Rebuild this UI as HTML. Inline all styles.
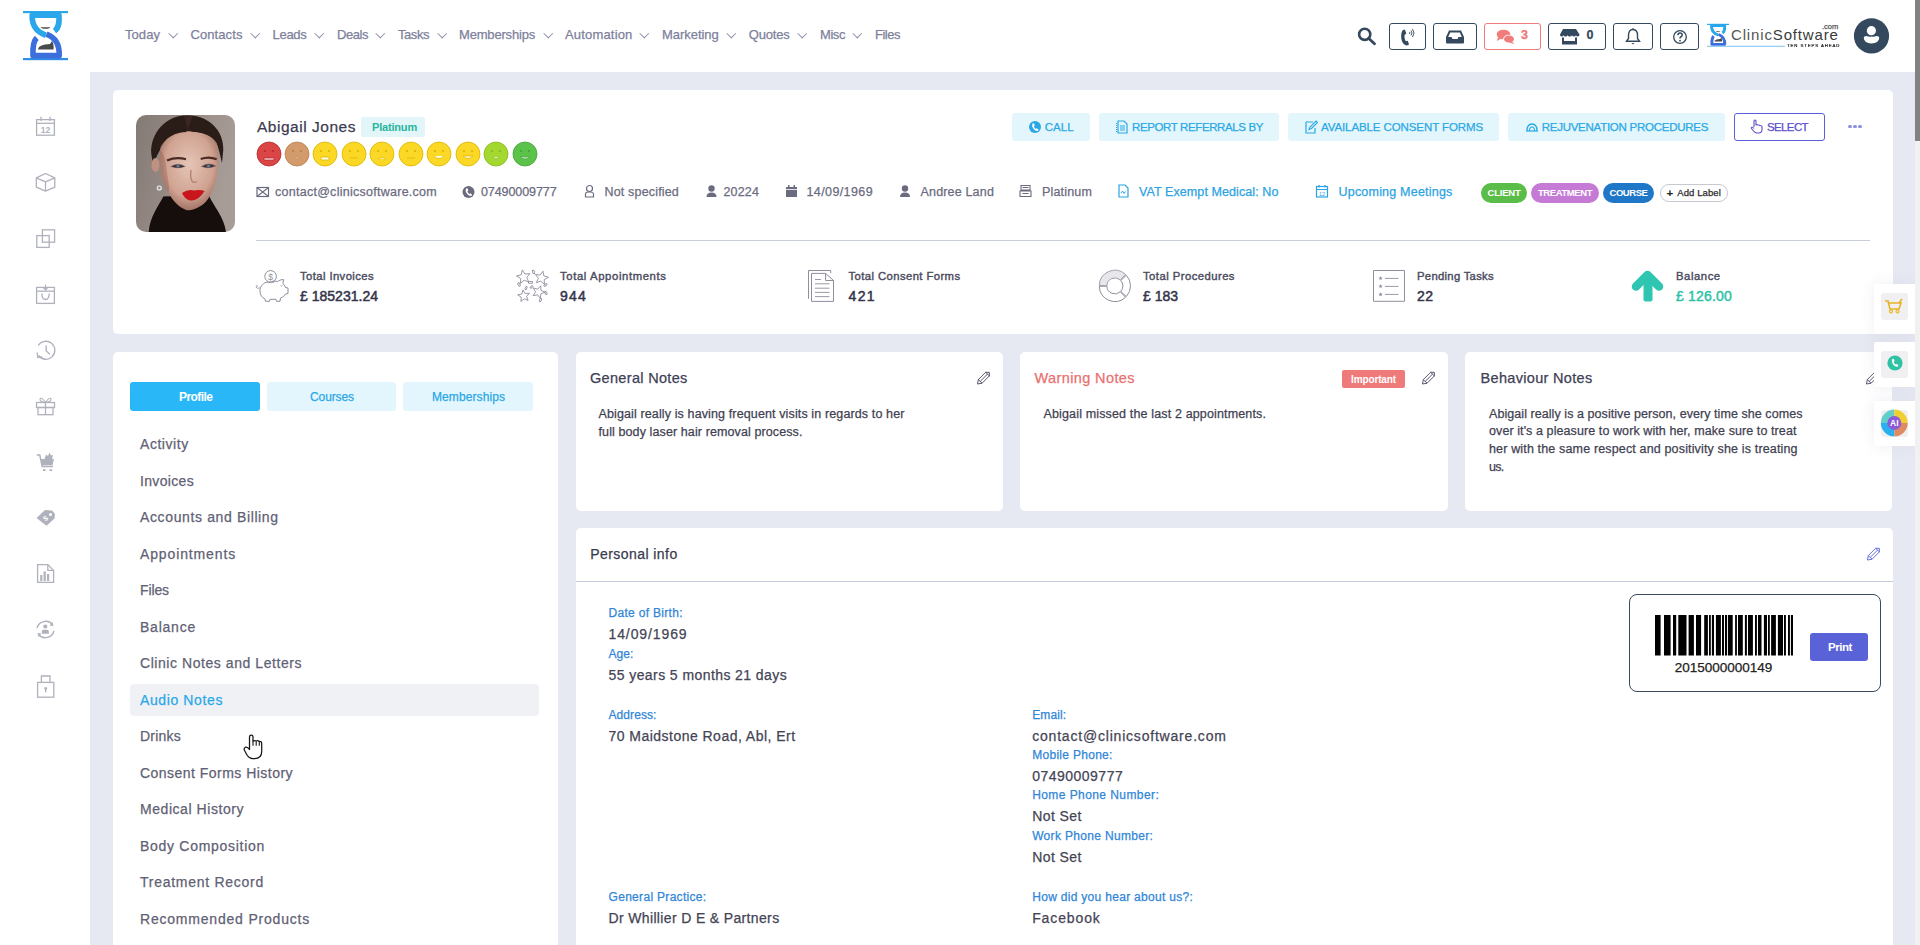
<!DOCTYPE html>
<html><head><meta charset="utf-8">
<style>
*{box-sizing:border-box;margin:0;padding:0}
html,body{width:1920px;height:945px;overflow:hidden;background:#fff;font-family:"Liberation Sans",sans-serif;}
.a{position:absolute;white-space:nowrap;-webkit-text-stroke:0.25px currentColor}
#hdr{position:absolute;left:0;top:0;width:1915px;height:72px;background:#fff}
.nav{position:absolute;top:27px;font-size:13px;color:#7d7f9b;letter-spacing:0.1px}
.nav .c{display:inline-block;width:7px;height:7px;border-right:1px solid #8a8ca6;border-bottom:1px solid #8a8ca6;transform:rotate(45deg) scale(.75);margin-left:7px;position:relative;top:-3px}
.hb{position:absolute;top:23px;height:27px;border:1.5px solid #34495e;border-radius:3px}
#side{position:absolute;left:0;top:72px;width:90px;height:873px;background:#fff}
#main{position:absolute;left:90px;top:72px;width:1825px;height:873px;background:#e6e9f2}
.card{position:absolute;background:#fff;border-radius:5px}
.chev{position:absolute;top:30.3px;width:6.5px;height:6.5px;border-right:1.2px solid #8c8ea8;border-bottom:1.2px solid #8c8ea8;transform:rotate(45deg)}
#sb{position:absolute;left:1915px;top:0;width:5px;height:945px;background:#f1f1f1}
#sbt{position:absolute;left:1915px;top:0;width:5px;height:141px;background:#828282}
</style></head><body>
<div id="main"></div>
<div id="side"></div>
<svg class="a" style="left:0;top:0" width="90" height="720" viewBox="0 0 90 720">
<g fill="none" stroke="#afb1bd" stroke-width="1.3">
<!-- calendar -->
<rect x="36.6" y="119.6" width="17.8" height="15.6"/>
<line x1="36.6" y1="123.3" x2="54.4" y2="123.3"/>
<line x1="41" y1="116.8" x2="41" y2="121"/><line x1="50" y1="116.8" x2="50" y2="121"/>
<!-- cube -->
<path d="M45.5,173.5 L54.8,177.8 L54.8,187.2 L45.5,191.2 L36.3,187.2 L36.3,177.8 Z M36.3,177.8 L45.5,181.8 L54.8,177.8 M45.5,181.8 L45.5,191.2" stroke-linejoin="round"/>
<!-- squares -->
<rect x="42.4" y="229.8" width="12.2" height="12.4"/>
<rect x="36.8" y="235.6" width="12.4" height="11.8"/>
<!-- bag -->
<rect x="36.6" y="287.4" width="17.8" height="16"/>
<line x1="36.6" y1="291.2" x2="54.4" y2="291.2"/>
<path d="M41.8,293.5 Q41.8,299.5 45.5,299.5 Q49.2,299.5 49.2,293.5"/>
<path d="M45.5,284.5 L45.5,290 M43.5,288 L45.5,290 L47.5,288" stroke-width="1.1"/>
<!-- history -->
<path d="M38.2,345.5 A9,9 0 1 1 38.5,355.5"/>
<path d="M37.2,352.5 L37.8,357.5 L42.2,356.8" stroke-width="1.3"/>
<path d="M46.2,345.5 L46.2,351 L50,354.2"/>
<!-- gift -->
<rect x="36.5" y="402.5" width="18" height="5"/>
<rect x="38" y="407.5" width="15" height="7.2"/>
<line x1="45.5" y1="402.5" x2="45.5" y2="414.7"/>
<path d="M45.5,402.5 Q41.5,396.5 40,399 Q39.5,401.8 45.5,402.5 Q51.5,401.8 51,399 Q49.5,396.5 45.5,402.5" stroke-width="1.1"/>
<!-- report -->
<path d="M37.6,564.6 L47.8,564.6 L53.6,570.4 L53.6,582.4 L37.6,582.4 Z M47.8,564.6 L47.8,570.4 L53.6,570.4"/>
<!-- user circle -->
<path d="M52.5,624.5 A9,9 0 0 0 37,628" stroke-width="1.4"/>
<path d="M38.5,634.5 A9,9 0 0 0 54,631" stroke-width="1.4"/>
<!-- lock -->
<rect x="37.6" y="682.4" width="16.2" height="14.8"/>
<path d="M41.4,682.4 L41.4,676 L50,676 L50,682.4"/>
</g>
<g fill="#afb1bd">
<text x="45.5" y="133.2" font-size="8.5" font-weight="bold" text-anchor="middle" font-family="Liberation Sans">12</text>
<!-- cart -->
<path d="M36.8,455 L39.8,455 L42.2,466.5 L53,466.5" fill="none" stroke="#afb1bd" stroke-width="1.5"/>
<path d="M40.8,459 L54,459 L52.5,465.3 L42.3,465.3 Z"/>
<path d="M44.5,459 L46,454.5 L48,456 L49.5,452.5 L51,455.5 L53,455 L52,459Z"/>
<rect x="43" y="469.2" width="2.6" height="1.8"/><rect x="49.5" y="469.2" width="2.6" height="1.8"/>
<!-- tag -->
<path d="M36.5,518 L45,510 L52,510.5 L55,514 L54.5,518.5 L46.5,525.8 Z"/>
<circle cx="50.5" cy="514.5" r="1.5" fill="#fff"/>
<text x="45" y="521" font-size="7" text-anchor="middle" fill="#fff" font-weight="bold" font-family="Liberation Sans" transform="rotate(-40 45 518)">$</text>
<!-- report bars -->
<rect x="40.2" y="575" width="2.2" height="6"/><rect x="43.6" y="571.5" width="2.2" height="9.5"/><rect x="47" y="574" width="2.2" height="7"/>
<!-- user inside -->
<circle cx="45.3" cy="626.6" r="2"/>
<path d="M41.8,633.8 L41.8,631.5 Q41.8,629.8 43.5,629.8 L47.1,629.8 Q48.8,629.8 48.8,631.5 L48.8,633.8 Z"/>
<path d="M52.5,622 L53.5,626 L49.5,625.5Z"/><path d="M38.5,637 L37.5,633 L41.5,633.5Z"/>
<!-- keyhole -->
<circle cx="45.7" cy="688.5" r="1.4"/><rect x="45" y="688.8" width="1.4" height="3.5"/>
</g>
</svg>

<div id="hdr">
<svg class="a" style="left:0;top:0" width="90" height="72" viewBox="0 0 90 72">
<rect x="23" y="11" width="45" height="2.2" fill="#2aa6ea"/>
<rect x="23" y="58" width="45" height="2.2" fill="#2f8fe6"/>
<path d="M54.5,31 C59.5,27.5 59.3,21 59,15.2 L32.2,15.2 C31.8,24 35,31.5 46,35.3" fill="none" stroke="#2aa6ea" stroke-width="5.6" stroke-linejoin="round"/>
<path d="M36.8,37.8 C33.2,41 32.6,47 33,55.6 L59.2,55.6 C59.6,45 56,37.8 46.5,34.2" fill="none" stroke="#3c6fdc" stroke-width="5.6" stroke-linejoin="round"/>
<path d="M40.5,27.2 L50.5,27.2 C49,29.2 42,29.2 40.5,27.2Z" fill="#4a4a4a"/>
<path d="M38,49.5 C38.5,45.5 43,44.5 50,44 L52,41 C53.5,43.5 54,47 53.5,49.5 Z" fill="#4a4a4a"/>
</svg><div class="a nav" style="left:125px;letter-spacing:0.062px">Today</div><div class="a chev" style="left:170px"></div><div class="a nav" style="left:190.5px;letter-spacing:0.087px">Contacts</div><div class="a chev" style="left:252px"></div><div class="a nav" style="left:272.5px;letter-spacing:-0.284px">Leads</div><div class="a chev" style="left:315.5px"></div><div class="a nav" style="left:337px;letter-spacing:-0.447px">Deals</div><div class="a chev" style="left:377px"></div><div class="a nav" style="left:398px;letter-spacing:-0.446px">Tasks</div><div class="a chev" style="left:438.5px"></div><div class="a nav" style="left:459px;letter-spacing:-0.184px">Memberships</div><div class="a chev" style="left:545px"></div><div class="a nav" style="left:565px;letter-spacing:0.174px">Automation</div><div class="a chev" style="left:641px"></div><div class="a nav" style="left:662px;letter-spacing:-0.037px">Marketing</div><div class="a chev" style="left:728px"></div><div class="a nav" style="left:748.75px;letter-spacing:-0.194px">Quotes</div><div class="a chev" style="left:798.5px"></div><div class="a nav" style="left:820px;letter-spacing:-0.430px">Misc</div><div class="a chev" style="left:854px"></div><div class="a nav" style="left:875px;letter-spacing:-0.490px">Files</div>

<svg class="a" style="left:1356px;top:26px" width="22" height="20" viewBox="0 0 22 20"><circle cx="8.7" cy="8.3" r="5.6" fill="none" stroke="#34495e" stroke-width="2.6"/><line x1="12.8" y1="12.4" x2="18.5" y2="17.8" stroke="#34495e" stroke-width="2.8" stroke-linecap="round"/></svg>
<div class="hb" style="left:1389px;width:37px"><svg class="a" style="left:9px;top:4px" width="18" height="18" viewBox="0 0 18 18"><path d="M3.6,2.2 L5.8,1.6 L7.3,5.6 L5.6,6.9 C5.2,9.2 5.8,11.6 6.9,13.2 L8.8,12.8 L10,16.6 L8,17.6 C4.8,17 2.5,14 2.2,9.5 C2,6.5 2.5,4 3.6,2.2Z" fill="#34495e"/><path d="M10.5,6 Q11.5,5 10.5,4 M12,7.5 Q14,5 12,2.5 M13.5,9 Q16.5,5 13.5,1" fill="none" stroke="#34495e" stroke-width="0.9"/></svg></div>
<div class="hb" style="left:1433px;width:44px"><svg class="a" style="left:11px;top:5px" width="20" height="16" viewBox="0 0 20 16"><path d="M4,1.5 L16,1.5 L19,8 L19,13.5 Q19,14.5 18,14.5 L2,14.5 Q1,14.5 1,13.5 L1,8 Z" fill="#34495e"/><path d="M5.2,3.5 L14.8,3.5 L16.8,8 L13.5,8 L12.5,10 L7.5,10 L6.5,8 L3.2,8 Z" fill="#fff"/></svg></div>
<div class="hb" style="left:1484px;width:57px;border-color:#f07c7c"><svg class="a" style="left:11px;top:5px" width="20" height="16" viewBox="0 0 20 16"><ellipse cx="7.5" cy="5.5" rx="6.8" ry="4.8" fill="#f07c7c"/><path d="M2,8.5 L0.8,12 L5,9.8Z" fill="#f07c7c"/><ellipse cx="13" cy="10" rx="5.8" ry="4.2" fill="#fff"/><ellipse cx="13" cy="10" rx="5" ry="3.6" fill="#f07c7c"/><path d="M16,12.5 L18.5,15 L13,13.5Z" fill="#f07c7c"/></svg><div class="a" style="left:36px;top:5px;font-size:12.5px;line-height:1;font-weight:bold;color:#ef7575">3</div></div>
<div class="hb" style="left:1548px;width:58px"><svg class="a" style="left:10px;top:4px" width="22" height="18" viewBox="0 0 22 18"><path d="M4,1 L17,1 L20.5,6.5 Q20.5,8.5 18.8,8.5 Q17.2,8.5 17,7.3 Q16.6,8.5 15,8.5 Q13.4,8.5 13,7.3 Q12.6,8.5 10.8,8.5 Q9,8.5 8.6,7.3 Q8.2,8.5 6.5,8.5 Q4.8,8.5 4.4,7.3 Q4,8.5 2.4,8.5 Q1,8.5 1,6.5 Z" fill="#34495e"/><path d="M3,9.5 L5,9.5 L5,13 L16,13 L16,9.5 L18,9.5 L18,16.5 L3,16.5Z" fill="#34495e"/></svg><div class="a" style="left:37.5px;top:5px;font-size:12.5px;line-height:1;font-weight:bold;color:#34495e">0</div></div>
<div class="hb" style="left:1613px;width:40px"><svg class="a" style="left:11px;top:4px" width="16" height="18" viewBox="0 0 16 18"><path d="M8,1.5 C4.5,1.5 3.5,4.5 3.5,7.5 L3.5,10.5 L1.5,13.3 L14.5,13.3 L12.5,10.5 L12.5,7.5 C12.5,4.5 11.5,1.5 8,1.5Z" fill="none" stroke="#34495e" stroke-width="1.4"/><path d="M6.6,15 L9.4,15 L8,16.5Z" fill="#34495e"/><circle cx="8" cy="1.2" r="0.9" fill="#34495e"/></svg></div>
<div class="hb" style="left:1660px;width:39px"><svg class="a" style="left:11px;top:4px" width="16" height="18" viewBox="0 0 16 18"><circle cx="8" cy="9" r="6.3" fill="none" stroke="#34495e" stroke-width="1.3"/><path d="M5.9,7.3 Q5.9,4.9 8,4.9 Q10.2,4.9 10.2,7 Q10.2,8.3 8.7,9 Q8,9.4 8,10.6" fill="none" stroke="#34495e" stroke-width="1.5"/><circle cx="8" cy="12.7" r="0.9" fill="#34495e"/></svg></div>
<svg class="a" style="left:1700px;top:20px" width="90" height="30" viewBox="1700 20 90 30"><g transform="translate(1707 23.8) scale(0.49 0.46) translate(-23 -11)">
<rect x="23" y="11" width="45" height="2.6" fill="#2aa6ea"/>
<path d="M54.5,31 C59.5,27.5 59.3,21 59,15.2 L32.2,15.2 C31.8,24 35,31.5 46,35.3" fill="none" stroke="#2aa6ea" stroke-width="6" stroke-linejoin="round"/>
<path d="M36.8,37.8 C33.2,41 32.6,47 33,55.6 L59.2,55.6 C59.6,45 56,37.8 46.5,34.2" fill="none" stroke="#3c6fdc" stroke-width="6" stroke-linejoin="round"/>
<path d="M40.5,27.2 L50.5,27.2 C49,29.2 42,29.2 40.5,27.2Z" fill="#4a4a4a"/>
<path d="M38,49.5 C38.5,45.5 43,44.5 50,44 L52,41 C53.5,43.5 54,47 53.5,49.5 Z" fill="#4a4a4a"/>
</g><rect x="1707" y="45.8" width="78" height="0.9" fill="#6cbcf0"/></svg>
<div class="a" style="left:1786px;top:24.3px;width:60px;height:1px"></div>
<div class="a" style="left:1731px;top:27.3px;font-size:15px;line-height:1;color:#3a3a3a;letter-spacing:0.85px;-webkit-text-stroke:0"><span style="color:#555">Clinic</span>Software</div>
<div class="a" style="left:1822px;top:23px;font-size:7.5px;line-height:1;color:#555">.com</div>
<div class="a" style="left:1787px;top:43.9px;font-size:6px;line-height:1;color:#222;letter-spacing:1.25px;transform:scale(0.72,0.62);transform-origin:0 0;-webkit-text-stroke:0.3px #222">TEN STEPS AHEAD</div>
<svg class="a" style="left:1850px;top:14px" width="44" height="44" viewBox="1850 14 44 44"><circle cx="1871.5" cy="35.9" r="17.6" fill="#34495e"/><circle cx="1871.4" cy="30.7" r="4.6" fill="#fff"/><path d="M1863.8,38.3 Q1863.8,36 1866.5,36 Q1869,37.2 1871.5,36.6 Q1874,37.2 1876.5,36 Q1879.2,36 1879.2,38.3 Q1878.8,43.4 1871.5,43.4 Q1864.2,43.4 1863.8,38.3Z" fill="#fff"/></svg>
</div>

<div class="card" style="left:113px;top:90px;width:1780px;height:244px"></div>
<svg class="a" style="left:136px;top:115px" width="99" height="117" viewBox="0 0 99 117">
<defs><filter id="soft" x="-5%" y="-5%" width="110%" height="110%"><feGaussianBlur stdDeviation="0.6"/></filter><clipPath id="pc"><rect width="99" height="117" rx="10"/></clipPath>
<linearGradient id="bgp" x1="0" y1="0" x2="1" y2="0.3"><stop offset="0" stop-color="#847a75"/><stop offset="1" stop-color="#a89c96"/></linearGradient>
<radialGradient id="skin" cx="0.5" cy="0.42" r="0.62"><stop offset="0" stop-color="#e6c5b6"/><stop offset="0.65" stop-color="#d0a392"/><stop offset="1" stop-color="#9a6a5c"/></radialGradient></defs>
<g clip-path="url(#pc)">
<rect width="99" height="117" fill="url(#bgp)"/><g filter="url(#soft)">
<path d="M12.7,117 C14,102 22,92 27.3,81.6 L72.7,80.3 C78,92 88,102 90,117Z" fill="#120b0b"/>
<path d="M15.3,39 C14,18 30,0.3 51.3,0.3 C73,0.3 88,16 87.3,35 L86,48 C84,40 82,30 80,28 L24,35 C20,42 18,48 17.3,51Z" fill="#2b1b17"/>
<path d="M51.3,16.3 C64,16 78,20 80.7,28.3 C83,38 82.5,46 82,51 C81,62 79,70 76.7,75 C74,82 70,88 64.7,91 C58,95 54,96 50,95 C42,92 36,85 32.7,77.6 C28,70 26,64 25.3,59 C24.5,50 23.5,42 24,35 C26,24 38,16.5 51.3,16.3Z" fill="url(#skin)"/>
<path d="M24,35 C28,22 40,17 51,17 C46,12 30,14 24,35Z M80.7,28.3 C76,20 64,16.5 55,16.8 C62,12 76,14 80.7,28.3Z" fill="#2b1b17"/>
<path d="M48,1 C50,8 51,12 51.5,16 C53,11 55,6 57,1Z" fill="#4a302a" opacity=".5"/>
<ellipse cx="19.5" cy="50" rx="4" ry="7" fill="#c09080"/><path d="M24,35 C23.5,42 24.5,50 25.3,59 C26,64 28,70 32.7,77.6 C34,72 31,60 30,50 C29,42 27,38 24,35Z" fill="#8a5a4c" opacity=".35"/>
<circle cx="23.3" cy="73" r="2.6" fill="#e4e4e4"/><circle cx="23.3" cy="73" r="1.2" fill="#888"/>
<path d="M31,45.5 Q40,41.5 50,44.3" stroke="#4a2c24" stroke-width="2.2" fill="none"/>
<path d="M64.7,44 Q73,41 80.7,44.3" stroke="#4a2c24" stroke-width="2.2" fill="none"/>
<path d="M34,51.5 Q42,46 50,51.5 Q42,55 34,51.5Z" fill="#5a4048" opacity=".5"/><path d="M35.3,51.5 Q42,47.5 48.7,51.5 Q42,54 35.3,51.5Z" fill="#3a3640"/><circle cx="42" cy="51" r="1.6" fill="#6a7a8a"/>
<path d="M64.5,51.5 Q72.5,46 80.5,51 Q72.5,55 64.5,51.5Z" fill="#5a4048" opacity=".5"/><path d="M66,51.5 Q72.5,47.5 79.3,51 Q72.5,54 66,51.5Z" fill="#3a3640"/><circle cx="72.5" cy="51" r="1.6" fill="#6a7a8a"/>
<path d="M55,55 Q54,63 56,66 Q58,68.5 61,66.5" stroke="#b48474" stroke-width="1.4" fill="none"/>
<path d="M46,78 Q52,74 58,75.5 Q64,74.5 68.7,76 Q62,86 55,85.6 Q49,85 46,78Z" fill="#c8141c"/>
</g></g></svg>
<div class="a" style="left:257px;top:119.38px;font-size:15.5px;color:#3b3b52;letter-spacing:0.523px;line-height:1;">Abigail Jones</div>
<div class="a" style="left:361px;top:117px;width:64px;height:20px;background:#e2f5f9;border-radius:2px"></div>
<div class="a" style="left:372px;top:121.69px;font-size:11px;color:#29b6a0;letter-spacing:-0.181px;font-weight:bold;-webkit-text-stroke:0;line-height:1;">Platinum</div>
<svg class="a" style="left:255.50px;top:141px" width="26" height="26" viewBox="-13 -13 26 26"><circle r="12" fill="#da4545" stroke="#b82a2c" stroke-width="0.8"/><circle cx="-4" cy="-3" r="1.1" fill="#b82a2c"/><circle cx="4" cy="-3" r="1.1" fill="#b82a2c"/><path d="M-5,4 L5,4 L5,6 L-5,6Z" fill="#fff" stroke="#b82a2c" stroke-width="0.8" opacity=".9"/></svg>
<svg class="a" style="left:283.95px;top:141px" width="26" height="26" viewBox="-13 -13 26 26"><circle r="12" fill="#d39b6b" stroke="#b88250" stroke-width="0.8"/><circle cx="-4" cy="-3" r="1.1" fill="#b88250"/><circle cx="4" cy="-3" r="1.1" fill="#b88250"/><path d="M-4,4 Q0,2 4,4" fill="#fff" stroke="#b88250" stroke-width="0.8" opacity=".9"/></svg>
<svg class="a" style="left:312.40px;top:141px" width="26" height="26" viewBox="-13 -13 26 26"><circle r="12" fill="#fad825" stroke="#dcb400" stroke-width="0.8"/><circle cx="-4" cy="-3" r="1.1" fill="#dcb400"/><circle cx="4" cy="-3" r="1.1" fill="#dcb400"/><path d="M-4,3 L4,3 L4,6 L-4,6Z" fill="#fff" stroke="#dcb400" stroke-width="0.8" opacity=".9"/></svg>
<svg class="a" style="left:340.85px;top:141px" width="26" height="26" viewBox="-13 -13 26 26"><circle r="12" fill="#fad825" stroke="#dcb400" stroke-width="0.8"/><circle cx="-4" cy="-3" r="1.1" fill="#dcb400"/><circle cx="4" cy="-3" r="1.1" fill="#dcb400"/><path d="M-4,4 L4,4" fill="#fff" stroke="#dcb400" stroke-width="0.8" opacity=".9"/></svg>
<svg class="a" style="left:369.30px;top:141px" width="26" height="26" viewBox="-13 -13 26 26"><circle r="12" fill="#fad825" stroke="#dcb400" stroke-width="0.8"/><circle cx="-4" cy="-3" r="1.1" fill="#dcb400"/><circle cx="4" cy="-3" r="1.1" fill="#dcb400"/><path d="M-4,5 Q0,2 4,5" fill="#fff" stroke="#dcb400" stroke-width="0.8" opacity=".9"/></svg>
<svg class="a" style="left:397.75px;top:141px" width="26" height="26" viewBox="-13 -13 26 26"><circle r="12" fill="#fad825" stroke="#dcb400" stroke-width="0.8"/><circle cx="-4" cy="-3" r="1.1" fill="#dcb400"/><circle cx="4" cy="-3" r="1.1" fill="#dcb400"/><path d="M-4,4 L4,4" fill="#fff" stroke="#dcb400" stroke-width="0.8" opacity=".9"/></svg>
<svg class="a" style="left:426.20px;top:141px" width="26" height="26" viewBox="-13 -13 26 26"><circle r="12" fill="#fad825" stroke="#dcb400" stroke-width="0.8"/><circle cx="-4" cy="-3" r="1.1" fill="#dcb400"/><circle cx="4" cy="-3" r="1.1" fill="#dcb400"/><path d="M-5,2 Q0,7 5,2" fill="#fff" stroke="#dcb400" stroke-width="0.8" opacity=".9"/></svg>
<svg class="a" style="left:454.65px;top:141px" width="26" height="26" viewBox="-13 -13 26 26"><circle r="12" fill="#fad825" stroke="#dcb400" stroke-width="0.8"/><circle cx="-4" cy="-3" r="1.1" fill="#dcb400"/><circle cx="4" cy="-3" r="1.1" fill="#dcb400"/><path d="M-5,2 Q0,7 5,2 Z" fill="#fff" stroke="#dcb400" stroke-width="0.8" opacity=".9"/></svg>
<svg class="a" style="left:483.10px;top:141px" width="26" height="26" viewBox="-13 -13 26 26"><circle r="12" fill="#a2d830" stroke="#86b81a" stroke-width="0.8"/><circle cx="-4" cy="-3" r="1.1" fill="#86b81a"/><circle cx="4" cy="-3" r="1.1" fill="#86b81a"/><path d="M-4,3 Q0,6 4,3" fill="#fff" stroke="#86b81a" stroke-width="0.8" opacity=".9"/></svg>
<svg class="a" style="left:511.55px;top:141px" width="26" height="26" viewBox="-13 -13 26 26"><circle r="12" fill="#5bc24a" stroke="#44a338" stroke-width="0.8"/><circle cx="-4" cy="-3" r="1.1" fill="#44a338"/><circle cx="4" cy="-3" r="1.1" fill="#44a338"/><path d="M-5,3 Q0,7 5,3Z" fill="#fff" stroke="#44a338" stroke-width="0.8" opacity=".9"/></svg>
<svg class="a" style="left:256px;top:185px" width="14" height="14" viewBox="0 0 14 14"><rect x="1" y="2.5" width="11.5" height="9" fill="none" stroke="#6b6b80" stroke-width="1.2"/><path d="M1,2.5 L12.5,11.5 M12.5,2.5 L1,11.5" stroke="#6b6b80" stroke-width="1.1"/></svg>
<div class="a" style="left:275px;top:185.92px;font-size:12.5px;color:#6b6b80;letter-spacing:0.265px;line-height:1;">contact@clinicsoftware.com</div>
<svg class="a" style="left:462px;top:185px" width="14" height="14" viewBox="0 0 14 14"><circle cx="6.5" cy="7" r="6" fill="#6b6b80"/><path d="M4,3.5 L5.5,3.3 L6.3,5.5 L5.4,6.2 Q5.8,8 7.2,9 L8.2,8.3 L10,9.5 L9.5,11 Q6,11 4.2,7.5 Q3.3,5.5 4,3.5Z" fill="#fff"/></svg>
<div class="a" style="left:481px;top:185.92px;font-size:12.5px;color:#6b6b80;letter-spacing:-0.089px;line-height:1;">07490009777</div>
<svg class="a" style="left:583px;top:184px" width="14" height="14" viewBox="0 0 14 14"><circle cx="6.5" cy="4.5" r="3" fill="none" stroke="#6b6b80" stroke-width="1.2"/><path d="M2.5,13 L2.5,10 Q2.5,8 6.5,8 Q10.5,8 10.5,10 L10.5,13Z" fill="none" stroke="#6b6b80" stroke-width="1.2"/></svg>
<div class="a" style="left:604.5px;top:185.92px;font-size:12.5px;color:#6b6b80;letter-spacing:0.172px;line-height:1;">Not specified</div>
<svg class="a" style="left:705px;top:184px" width="14" height="14" viewBox="0 0 14 14"><circle cx="6.5" cy="4.5" r="3.2" fill="#6b6b80"/><path d="M1.5,13 Q1.5,8.5 6.5,8.5 Q11.5,8.5 11.5,13Z" fill="#6b6b80"/></svg>
<div class="a" style="left:723.5px;top:185.92px;font-size:12.5px;color:#6b6b80;letter-spacing:0.148px;line-height:1;">20224</div>
<svg class="a" style="left:785px;top:184px" width="14" height="14" viewBox="0 0 14 14"><rect x="1" y="3" width="11" height="10" fill="#6b6b80"/><rect x="3" y="1" width="1.5" height="3" fill="#6b6b80"/><rect x="8.5" y="1" width="1.5" height="3" fill="#6b6b80"/><rect x="1" y="5" width="11" height="0.8" fill="#fff"/></svg>
<div class="a" style="left:806.5px;top:185.92px;font-size:12.5px;color:#6b6b80;letter-spacing:0.394px;line-height:1;">14/09/1969</div>
<svg class="a" style="left:899px;top:184px" width="14" height="14" viewBox="0 0 14 14"><circle cx="6" cy="4.5" r="3.2" fill="#6b6b80"/><path d="M1,13 Q1,8.5 6,8.5 Q11,8.5 11,13Z" fill="#6b6b80"/></svg>
<div class="a" style="left:920.5px;top:185.92px;font-size:12.5px;color:#6b6b80;letter-spacing:0.174px;line-height:1;">Andree Land</div>
<svg class="a" style="left:1019px;top:184px" width="14" height="14" viewBox="0 0 14 14"><path d="M2,1.5 L11,1.5 L11,6 L2,6Z M1,7 L12,7 L12,12.5 L1,12.5Z" fill="none" stroke="#6b6b80" stroke-width="1.1"/><path d="M3.5,3.5 L9.5,3.5 M3.5,9.5 L9.5,9.5" stroke="#6b6b80" stroke-width="1"/></svg>
<div class="a" style="left:1042px;top:185.92px;font-size:12.5px;color:#6b6b80;letter-spacing:0.171px;line-height:1;">Platinum</div>
<svg class="a" style="left:1117px;top:184px" width="14" height="14" viewBox="0 0 14 14"><path d="M2,1 L8,1 L11,4 L11,13 L2,13Z" fill="none" stroke="#2aa3e3" stroke-width="1.2"/><path d="M4,9 L5.5,7 L7,9.5 L8.5,7.5" fill="none" stroke="#2aa3e3" stroke-width="1"/></svg>
<div class="a" style="left:1139px;top:185.92px;font-size:12.5px;color:#2aa3e3;letter-spacing:0.089px;line-height:1;">VAT Exempt Medical: No</div>
<svg class="a" style="left:1315px;top:184px" width="14" height="14" viewBox="0 0 14 14"><rect x="1.5" y="2.5" width="11" height="10.5" fill="none" stroke="#2aa3e3" stroke-width="1.2"/><path d="M1.5,5.5 L12.5,5.5 M4,1 L4,3.5 M10,1 L10,3.5" stroke="#2aa3e3" stroke-width="1.2"/><text x="7" y="11.5" font-size="5.5" text-anchor="middle" fill="#2aa3e3" font-family="Liberation Sans">12</text></svg>
<div class="a" style="left:1338.5px;top:185.92px;font-size:12.5px;color:#2aa3e3;letter-spacing:0.208px;line-height:1;">Upcoming Meetings</div>
<div class="a" style="left:1481px;top:183px;width:46px;height:20px;background:#5bbd49;border-radius:10px;"></div><div class="a" style="left:1487.5px;top:188.46px;font-size:9.5px;color:#fff;letter-spacing:-0.217px;font-weight:bold;-webkit-text-stroke:0;line-height:1;">CLIENT</div>
<div class="a" style="left:1531px;top:183px;width:68px;height:20px;background:#c57bd6;border-radius:10px;"></div><div class="a" style="left:1538.0px;top:188.46px;font-size:9.5px;color:#fff;letter-spacing:-0.430px;font-weight:bold;-webkit-text-stroke:0;line-height:1;">TREATMENT</div>
<div class="a" style="left:1603px;top:183px;width:51px;height:20px;background:#1f77c7;border-radius:10px;"></div><div class="a" style="left:1609.5px;top:188.46px;font-size:9.5px;color:#fff;letter-spacing:-0.441px;font-weight:bold;-webkit-text-stroke:0;line-height:1;">COURSE</div>
<div class="a" style="left:1660px;top:184px;width:68px;height:18px;background:#fff;border:1px solid #c8c8d0;border-radius:9px"></div>
<div class="a" style="left:1666.5px;top:187.57px;font-size:11.5px;color:#222;letter-spacing:-0.016px;font-weight:bold;-webkit-text-stroke:0;line-height:1;">+</div>
<div class="a" style="left:1677.2px;top:188.46px;font-size:9.5px;color:#2a2a2a;letter-spacing:0.112px;line-height:1;">Add Label</div>
<div class="a" style="left:1012px;top:113px;width:78px;height:28px;background:#e3f6fc;border-radius:3px"></div><svg class="a" style="left:1027.7px;top:120px" width="14" height="14" viewBox="0 0 14 14"><circle cx="7" cy="7" r="6" fill="#2aa8e6"/><path d="M4.5,3.5 L6,3.3 L6.8,5.5 L5.9,6.2 Q6.3,8 7.7,9 L8.7,8.3 L10.5,9.5 L10,11 Q6.5,11 4.7,7.5 Q3.8,5.5 4.5,3.5Z" fill="#fff"/></svg><div class="a" style="left:1044.7px;top:121.97px;font-size:11.5px;color:#2aa8e6;letter-spacing:0.058px;line-height:1;">CALL</div>
<div class="a" style="left:1099px;top:113px;width:180px;height:28px;background:#e3f6fc;border-radius:3px"></div><svg class="a" style="left:1115px;top:120px" width="14" height="14" viewBox="0 0 14 14"><path d="M3,1 L9,1 L12,4 L12,13 L3,13Z" fill="none" stroke="#2aa8e6" stroke-width="1.2"/><path d="M5,6 L10,6 M5,8 L10,8 M5,10 L10,10" stroke="#2aa8e6" stroke-width="1"/><path d="M1.5,3 L1.5,12" stroke="#2aa8e6" stroke-width="1" stroke-dasharray="1 1"/></svg><div class="a" style="left:1132px;top:121.97px;font-size:11.5px;color:#2aa8e6;letter-spacing:-0.382px;line-height:1;">REPORT REFERRALS BY</div>
<div class="a" style="left:1288px;top:113px;width:211px;height:28px;background:#e3f6fc;border-radius:3px"></div><svg class="a" style="left:1304px;top:120px" width="14" height="14" viewBox="0 0 14 14"><path d="M2,2 L9,2 M2,2 L2,13 L11,13 L11,8" fill="none" stroke="#2aa8e6" stroke-width="1.2"/><path d="M5,9.5 L6,7 L12,1 L13.5,2.5 L7.5,8.5Z" fill="none" stroke="#2aa8e6" stroke-width="1.1"/></svg><div class="a" style="left:1321px;top:121.97px;font-size:11.5px;color:#2aa8e6;letter-spacing:-0.097px;line-height:1;">AVAILABLE CONSENT FORMS</div>
<div class="a" style="left:1508px;top:113px;width:217px;height:28px;background:#e3f6fc;border-radius:3px"></div><svg class="a" style="left:1524.7px;top:120px" width="14" height="14" viewBox="0 0 14 14"><path d="M2,11 Q2,4 7,4 Q12,4 12,11" fill="none" stroke="#2aa8e6" stroke-width="1.3"/><path d="M4.5,11 Q4.5,7 7,7 Q9.5,7 9.5,11" fill="none" stroke="#2aa8e6" stroke-width="1.2"/><path d="M1,11 L13,11" stroke="#2aa8e6" stroke-width="1.2"/></svg><div class="a" style="left:1541.7px;top:121.97px;font-size:11.5px;color:#2aa8e6;letter-spacing:-0.253px;line-height:1;">REJUVENATION PROCEDURES</div>
<div class="a" style="left:1734px;top:113px;width:91px;height:28px;background:#fff;border:1.3px solid #5a5ed8;border-radius:3px"></div>
<svg class="a" style="left:1750px;top:119px" width="13" height="15" viewBox="0 0 13 15"><path d="M4,8 L4,2 Q4,1 5,1 Q6,1 6,2 L6,6.5 Q6,5.5 7,5.5 Q8,5.5 8,6.5 Q8,6 9,6 Q10,6 10,7 Q10,6.5 11,6.8 Q12,7 12,8 L12,10.5 Q12,14 8.5,14 L7,14 Q5,14 3.5,12 L1.5,9.5 Q1,8.5 2,8.2 Q3,8 4,9.5" fill="none" stroke="#5a4fc8" stroke-width="1.1"/></svg>
<div class="a" style="left:1767px;top:121.97px;font-size:11.5px;color:#5b4fcf;letter-spacing:-0.623px;line-height:1;">SELECT</div>
<div class="a" style="left:1848px;top:124.5px;width:3.5px;height:3.5px;border-radius:50%;background:#8d8fe0"></div>
<div class="a" style="left:1853px;top:124.5px;width:3.5px;height:3.5px;border-radius:50%;background:#8d8fe0"></div>
<div class="a" style="left:1858px;top:124.5px;width:3.5px;height:3.5px;border-radius:50%;background:#8d8fe0"></div>
<div class="a" style="left:256px;top:240px;width:1614px;height:1px;background:#c9cedb"></div>
<div class="a" style="left:300px;top:270.63px;font-size:11.3px;color:#4b4b5e;letter-spacing:0.396px;line-height:1;-webkit-text-stroke:0.4px currentColor;">Total Invoices</div><div class="a" style="left:300px;top:289.35px;font-size:14px;color:#34344a;letter-spacing:0.013px;line-height:1;-webkit-text-stroke:0.5px currentColor;">£ 185231.24</div>
<div class="a" style="left:560px;top:270.63px;font-size:11.3px;color:#4b4b5e;letter-spacing:0.612px;line-height:1;-webkit-text-stroke:0.4px currentColor;">Total Appointments</div><div class="a" style="left:560px;top:289.35px;font-size:14px;color:#34344a;letter-spacing:1.214px;line-height:1;-webkit-text-stroke:0.5px currentColor;">944</div>
<div class="a" style="left:848.5px;top:270.63px;font-size:11.3px;color:#4b4b5e;letter-spacing:0.408px;line-height:1;-webkit-text-stroke:0.4px currentColor;">Total Consent Forms</div><div class="a" style="left:848.5px;top:289.35px;font-size:14px;color:#34344a;letter-spacing:1.380px;line-height:1;-webkit-text-stroke:0.5px currentColor;">421</div>
<div class="a" style="left:1143px;top:270.63px;font-size:11.3px;color:#4b4b5e;letter-spacing:0.450px;line-height:1;-webkit-text-stroke:0.4px currentColor;">Total Procedures</div><div class="a" style="left:1143px;top:289.35px;font-size:14px;color:#34344a;letter-spacing:-0.007px;line-height:1;-webkit-text-stroke:0.5px currentColor;">£ 183</div>
<div class="a" style="left:1417px;top:270.63px;font-size:11.3px;color:#4b4b5e;letter-spacing:0.285px;line-height:1;-webkit-text-stroke:0.4px currentColor;">Pending Tasks</div><div class="a" style="left:1417px;top:289.35px;font-size:14px;color:#34344a;letter-spacing:0.464px;line-height:1;-webkit-text-stroke:0.5px currentColor;">22</div>
<svg class="a" style="left:240px;top:260px" width="1200" height="50" viewBox="240 260 1200 50"><g fill="none" stroke="#8d8f9d" stroke-width="1" stroke-linejoin="round">
<circle cx="270.6" cy="276.4" r="5.8"/>
<path d="M266,282.3 C262,284 260,287 260,291 C260,295 262,297.5 265,299 L265.5,301.3 L269.5,301.3 L270,299.3 L276,299.3 L276.5,301.3 L280,301.3 L280.5,298 C283,297 285,295.5 285.5,294 L288,293.5 L288,288 L285.5,287.5 C285,286 284,284.5 283,283.5 L283.5,279.5 C281,279.5 279,280.5 277.5,281.5 C276,281.2 274,281 272.5,281.2"/>
<path d="M266,282.2 L274,282.2"/>
<path d="M280.5,285.5 Q281.5,286.5 282.5,285.5" stroke-width="0.8"/>
<path d="M260,288 Q256.5,289 256,287 Q256,285 258,286" stroke-width="0.8"/>
<path d="M522.35,269.91 L525.02,274.09 L529.96,273.62 L526.81,277.45 L528.78,282.00 L524.16,280.19 L520.44,283.47 L520.74,278.52 L516.47,276.00 L521.27,274.75Z M542.96,271.15 L543.84,275.89 L548.46,277.27 L544.23,279.57 L544.35,284.39 L540.85,281.08 L536.30,282.68 L538.37,278.33 L535.44,274.50 L540.22,275.12Z M522.94,289.86 L525.11,293.54 L529.37,293.28 L526.55,296.48 L528.11,300.46 L524.19,298.76 L520.89,301.47 L521.29,297.22 L517.69,294.92 L521.86,293.99Z M540.76,285.80 L540.96,290.34 L545.10,292.23 L540.84,293.83 L540.32,298.34 L537.48,294.79 L533.03,295.69 L535.53,291.90 L533.30,287.94 L537.68,289.15Z" stroke-width="0.9"/>
<g stroke-width="0.9"><ellipse cx="533.5" cy="272" rx="1" ry="1.9" transform="rotate(-25 533.5 272)"/><ellipse cx="519" cy="284.5" rx="1" ry="1.8" transform="rotate(-30 519 284.5)"/><ellipse cx="526" cy="288" rx="0.9" ry="1.7" transform="rotate(25 526 288)"/><ellipse cx="531.5" cy="287" rx="0.9" ry="1.6" transform="rotate(50 531.5 287)"/><rect x="528.5" y="281.5" width="4" height="1.8"/><ellipse cx="545.5" cy="285" rx="0.9" ry="1.9" transform="rotate(55 545.5 285)"/><ellipse cx="546" cy="293" rx="0.9" ry="1.7" transform="rotate(-25 546 293)"/><ellipse cx="540.5" cy="300" rx="0.9" ry="1.8" transform="rotate(25 540.5 300)"/></g>
<path d="M808.5,298.8 L808.5,270.5 L830.7,270.5 L830.7,273.2"/>
<path d="M811.5,301.4 L811.5,273.4 L825.6,273.4 L833.5,280.5 L833.5,301.4 Z M825.6,273.4 L825.6,280.5 L833.5,280.5" fill="#fff"/>
<path d="M815,279.5 L821,279.5 M815,283.8 L829.5,283.8 M815,288.2 L829.5,288.2 M815,292.4 L829.5,292.4 M815,296.6 L829.5,296.6" stroke-width="0.9"/>
<path d="M1099.31,285.49 A15.6,15.6 0 0 1 1125.54,274.49 L1120.36,280.05 A8,8 0 0 0 1106.90,285.69 Z" />
<path d="M1126.31,275.26 A15.6,15.6 0 0 1 1126.31,296.54 L1120.75,291.36 A8,8 0 0 0 1120.75,280.44 Z" />
<path d="M1125.54,297.31 A15.6,15.6 0 0 1 1099.31,286.31 L1106.90,286.11 A8,8 0 0 0 1120.36,291.75 Z" />
<rect x="1373.5" y="270.5" width="31" height="30.8"/>
<path d="M1385,278.4 L1398.5,278.4 M1385,286.4 L1398.5,286.4 M1385,294.4 L1398.5,294.4" stroke-width="0.9"/>
</g>
<path d="M1099.31,285.49 A15.6,15.6 0 0 1 1125.54,274.49 L1120.36,280.05 A8,8 0 0 0 1106.90,285.69 Z" fill="#cfd0d8" opacity=".5"/>
<g fill="#8d8f9d"><text x="270.6" y="279.8" font-size="8.5" text-anchor="middle" font-family="Liberation Sans">$</text><path d="M1380.60,276.10 L1381.18,277.50 L1382.69,277.62 L1381.54,278.61 L1381.89,280.08 L1380.60,279.29 L1379.31,280.08 L1379.66,278.61 L1378.51,277.62 L1380.02,277.50Z M1380.60,284.10 L1381.18,285.50 L1382.69,285.62 L1381.54,286.61 L1381.89,288.08 L1380.60,287.29 L1379.31,288.08 L1379.66,286.61 L1378.51,285.62 L1380.02,285.50Z M1380.60,292.20 L1381.18,293.60 L1382.69,293.72 L1381.54,294.71 L1381.89,296.18 L1380.60,295.39 L1379.31,296.18 L1379.66,294.71 L1378.51,293.72 L1380.02,293.60Z"/></g>
</svg>
<svg class="a" style="left:1630px;top:269px" width="36" height="34" viewBox="0 0 36 34"><path d="M6,17.5 L17.5,6 L29,17.5" fill="none" stroke="#2ec6b0" stroke-width="8.5" stroke-linecap="round" stroke-linejoin="round"/><rect x="13.5" y="8" width="9" height="24.5" rx="2" fill="#2ec6b0"/></svg><div class="a" style="left:1676px;top:270.63px;font-size:11.3px;color:#4b4b5e;letter-spacing:0.552px;line-height:1;-webkit-text-stroke:0.4px currentColor;">Balance</div><div class="a" style="left:1676px;top:289.35px;font-size:14px;color:#2ec1a6;letter-spacing:0.188px;line-height:1;-webkit-text-stroke:0.45px currentColor;">£ 126.00</div>
<div class="card" style="left:113px;top:352px;width:445px;height:600px"></div>
<div class="a" style="left:130px;top:382px;width:130px;height:29px;background:#29b7f8;border-radius:3px"></div>
<div class="a" style="left:179px;top:390.84px;font-size:12px;color:#fff;letter-spacing:-0.549px;font-weight:bold;-webkit-text-stroke:0;line-height:1;">Profile</div>
<div class="a" style="left:267px;top:382px;width:129px;height:29px;background:#e3f6fd;border-radius:3px"></div>
<div class="a" style="left:310px;top:390.84px;font-size:12px;color:#2aa8e6;letter-spacing:-0.098px;line-height:1;">Courses</div>
<div class="a" style="left:403px;top:382px;width:130px;height:29px;background:#e3f6fd;border-radius:3px"></div>
<div class="a" style="left:432px;top:390.84px;font-size:12px;color:#2aa8e6;letter-spacing:0.089px;line-height:1;">Memberships</div>
<div class="a" style="left:130px;top:684px;width:409px;height:32px;background:#f0f1f5;border-radius:4px"></div>
<div class="a" style="left:140px;top:437.15px;font-size:14px;color:#5f6174;letter-spacing:0.545px;line-height:1;">Activity</div>
<div class="a" style="left:140px;top:473.65px;font-size:14px;color:#5f6174;letter-spacing:0.330px;line-height:1;">Invoices</div>
<div class="a" style="left:140px;top:510.15px;font-size:14px;color:#5f6174;letter-spacing:0.631px;line-height:1;">Accounts and Billing</div>
<div class="a" style="left:140px;top:546.65px;font-size:14px;color:#5f6174;letter-spacing:0.866px;line-height:1;">Appointments</div>
<div class="a" style="left:140px;top:583.15px;font-size:14px;color:#5f6174;letter-spacing:-0.112px;line-height:1;">Files</div>
<div class="a" style="left:140px;top:619.65px;font-size:14px;color:#5f6174;letter-spacing:0.772px;line-height:1;">Balance</div>
<div class="a" style="left:140px;top:656.15px;font-size:14px;color:#5f6174;letter-spacing:0.557px;line-height:1;">Clinic Notes and Letters</div>
<div class="a" style="left:140px;top:692.65px;font-size:14px;color:#29a8e8;letter-spacing:0.612px;line-height:1;">Audio Notes</div>
<div class="a" style="left:140px;top:729.15px;font-size:14px;color:#5f6174;letter-spacing:0.222px;line-height:1;">Drinks</div>
<div class="a" style="left:140px;top:765.65px;font-size:14px;color:#5f6174;letter-spacing:0.469px;line-height:1;">Consent Forms History</div>
<div class="a" style="left:140px;top:802.15px;font-size:14px;color:#5f6174;letter-spacing:0.554px;line-height:1;">Medical History</div>
<div class="a" style="left:140px;top:838.65px;font-size:14px;color:#5f6174;letter-spacing:0.711px;line-height:1;">Body Composition</div>
<div class="a" style="left:140px;top:875.15px;font-size:14px;color:#5f6174;letter-spacing:0.731px;line-height:1;">Treatment Record</div>
<div class="a" style="left:140px;top:911.65px;font-size:14px;color:#5f6174;letter-spacing:0.796px;line-height:1;">Recommended Products</div>
<div class="card" style="left:576px;top:352px;width:427px;height:158.5px"></div>
<div class="a" style="left:590px;top:371.23px;font-size:14.5px;color:#3e3e55;letter-spacing:0.316px;line-height:1;">General Notes</div>
<svg class="a" style="left:976px;top:370px" width="15" height="15" viewBox="0 0 15 15"><path d="M1.5,14 L2.3,9.6 L9.6,2.3 L13.3,2.3 L13.4,5.9 L6.1,13.2 Z M2.3,9.6 L6.1,13.2 M9.6,2.3 L13.4,5.9 M4.2,11.4 L11.5,4.1" fill="none" stroke="#3a3a55" stroke-width="0.85" stroke-linejoin="round"/></svg>
<div class="a" style="left:598.5px;top:407.92px;font-size:12.5px;color:#3f3f52;letter-spacing:0.125px;line-height:1;">Abigail really is having frequent visits in regards to her</div>
<div class="a" style="left:598.5px;top:425.92px;font-size:12.5px;color:#3f3f52;letter-spacing:0.106px;line-height:1;">full body laser hair removal process.</div>
<div class="card" style="left:1020px;top:352px;width:428px;height:158.5px"></div>
<div class="a" style="left:1034.5px;top:371.23px;font-size:14.5px;color:#ea7070;letter-spacing:0.387px;line-height:1;">Warning Notes</div>
<div class="a" style="left:1342px;top:370px;width:63px;height:18px;background:#ef7a7a;border-radius:2px"></div>
<div class="a" style="left:1351px;top:374.54px;font-size:10px;color:#fff;letter-spacing:-0.123px;font-weight:bold;-webkit-text-stroke:0;line-height:1;">Important</div>
<svg class="a" style="left:1421px;top:370px" width="15" height="15" viewBox="0 0 15 15"><path d="M1.5,14 L2.3,9.6 L9.6,2.3 L13.3,2.3 L13.4,5.9 L6.1,13.2 Z M2.3,9.6 L6.1,13.2 M9.6,2.3 L13.4,5.9 M4.2,11.4 L11.5,4.1" fill="none" stroke="#3a3a55" stroke-width="0.85" stroke-linejoin="round"/></svg>
<div class="a" style="left:1043.5px;top:407.92px;font-size:12.5px;color:#3f3f52;letter-spacing:0.149px;line-height:1;">Abigail missed the last 2 appointments.</div>
<div class="card" style="left:1465px;top:352px;width:427px;height:158.5px"></div>
<div class="a" style="left:1480.5px;top:371.23px;font-size:14.5px;color:#3e3e55;letter-spacing:0.320px;line-height:1;">Behaviour Notes</div>
<svg class="a" style="left:1865px;top:370px" width="15" height="15" viewBox="0 0 15 15"><path d="M1.5,14 L2.3,9.6 L9.6,2.3 L13.3,2.3 L13.4,5.9 L6.1,13.2 Z M2.3,9.6 L6.1,13.2 M9.6,2.3 L13.4,5.9 M4.2,11.4 L11.5,4.1" fill="none" stroke="#3a3a55" stroke-width="0.85" stroke-linejoin="round"/></svg>
<div class="a" style="left:1489px;top:407.62px;font-size:12.5px;color:#3f3f52;letter-spacing:0.064px;line-height:1;">Abigail really is a positive person, every time she comes</div>
<div class="a" style="left:1489px;top:425.32px;font-size:12.5px;color:#3f3f52;letter-spacing:0.087px;line-height:1;">over it's a pleasure to work with her, make sure to treat</div>
<div class="a" style="left:1489px;top:443.02px;font-size:12.5px;color:#3f3f52;letter-spacing:0.153px;line-height:1;">her with the same respect and positivity she is treating</div>
<div class="a" style="left:1489px;top:460.72px;font-size:12.5px;color:#3f3f52;letter-spacing:-0.725px;line-height:1;">us.</div>
<div class="card" style="left:576px;top:528px;width:1317px;height:430px"></div>
<div class="a" style="left:590.3px;top:547.15px;font-size:14px;color:#3a3a4e;letter-spacing:0.429px;line-height:1;">Personal info</div>
<svg class="a" style="left:1866px;top:546px" width="15" height="15" viewBox="0 0 15 15"><path d="M1.5,14 L2.3,9.6 L9.6,2.3 L13.3,2.3 L13.4,5.9 L6.1,13.2 Z M2.3,9.6 L6.1,13.2 M9.6,2.3 L13.4,5.9 M4.2,11.4 L11.5,4.1" fill="none" stroke="#4a58d8" stroke-width="0.85" stroke-linejoin="round"/></svg>
<div class="a" style="left:576px;top:581px;width:1317px;height:1px;background:#c6cbd9"></div>
<div class="a" style="left:608.5px;top:606.84px;font-size:12px;color:#2f86d8;letter-spacing:0.305px;line-height:1;">Date of Birth:</div><div class="a" style="left:608.5px;top:626.85px;font-size:14px;color:#444455;letter-spacing:0.893px;line-height:1;">14/09/1969</div>
<div class="a" style="left:608.5px;top:647.64px;font-size:12px;color:#2f86d8;letter-spacing:0.078px;line-height:1;">Age:</div><div class="a" style="left:608.5px;top:667.65px;font-size:14px;color:#444455;letter-spacing:0.420px;line-height:1;">55 years 5 months 21 days</div>
<div class="a" style="left:608.5px;top:708.54px;font-size:12px;color:#2f86d8;letter-spacing:0.080px;line-height:1;">Address:</div><div class="a" style="left:608.5px;top:728.55px;font-size:14px;color:#444455;letter-spacing:0.469px;line-height:1;">70 Maidstone Road, Abl, Ert</div>
<div class="a" style="left:608.5px;top:891.14px;font-size:12px;color:#2f86d8;letter-spacing:0.311px;line-height:1;">General Practice:</div><div class="a" style="left:608.5px;top:911.15px;font-size:14px;color:#444455;letter-spacing:0.353px;line-height:1;">Dr Whillier D E &amp; Partners</div>
<div class="a" style="left:1032.2px;top:708.54px;font-size:12px;color:#2f86d8;letter-spacing:0.110px;line-height:1;">Email:</div><div class="a" style="left:1032.2px;top:728.55px;font-size:14px;color:#444455;letter-spacing:0.799px;line-height:1;">contact@clinicsoftware.com</div>
<div class="a" style="left:1032.2px;top:748.64px;font-size:12px;color:#2f86d8;letter-spacing:0.291px;line-height:1;">Mobile Phone:</div><div class="a" style="left:1032.2px;top:768.65px;font-size:14px;color:#444455;letter-spacing:0.486px;line-height:1;">07490009777</div>
<div class="a" style="left:1032.2px;top:789.34px;font-size:12px;color:#2f86d8;letter-spacing:0.423px;line-height:1;">Home Phone Number:</div><div class="a" style="left:1032.2px;top:809.35px;font-size:14px;color:#444455;letter-spacing:0.401px;line-height:1;">Not Set</div>
<div class="a" style="left:1032.2px;top:829.84px;font-size:12px;color:#2f86d8;letter-spacing:0.324px;line-height:1;">Work Phone Number:</div><div class="a" style="left:1032.2px;top:849.85px;font-size:14px;color:#444455;letter-spacing:0.401px;line-height:1;">Not Set</div>
<div class="a" style="left:1032.2px;top:891.14px;font-size:12px;color:#2f86d8;letter-spacing:0.305px;line-height:1;">How did you hear about us?:</div><div class="a" style="left:1032.2px;top:911.15px;font-size:14px;color:#444455;letter-spacing:0.877px;line-height:1;">Facebook</div>
<div class="a" style="left:1629px;top:594px;width:252px;height:98px;border:1.3px solid #3b4a5e;border-radius:8px;background:#fff"></div>
<svg class="a" style="left:1655px;top:615.3px" width="139" height="41" viewBox="0 0 139 41"><rect x="0.0" y="0" width="5.6" height="40.5" fill="#000"/><rect x="9.0" y="0" width="6.6" height="40.5" fill="#000"/><rect x="18.0" y="0" width="3.2" height="40.5" fill="#000"/><rect x="23.3" y="0" width="8.2" height="40.5" fill="#000"/><rect x="33.6" y="0" width="5.3" height="40.5" fill="#000"/><rect x="41.0" y="0" width="5.1" height="40.5" fill="#000"/><rect x="49.2" y="0" width="3.7" height="40.5" fill="#000"/><rect x="54.0" y="0" width="1.8" height="40.5" fill="#000"/><rect x="56.9" y="0" width="2.1" height="40.5" fill="#000"/><rect x="60.9" y="0" width="5.0" height="40.5" fill="#000"/><rect x="67.0" y="0" width="2.0" height="40.5" fill="#000"/><rect x="70.0" y="0" width="2.0" height="40.5" fill="#000"/><rect x="72.9" y="0" width="4.8" height="40.5" fill="#000"/><rect x="80.1" y="0" width="1.8" height="40.5" fill="#000"/><rect x="83.0" y="0" width="4.8" height="40.5" fill="#000"/><rect x="89.9" y="0" width="2.0" height="40.5" fill="#000"/><rect x="93.0" y="0" width="4.9" height="40.5" fill="#000"/><rect x="100.0" y="0" width="1.9" height="40.5" fill="#000"/><rect x="103.0" y="0" width="3.5" height="40.5" fill="#000"/><rect x="108.9" y="0" width="3.1" height="40.5" fill="#000"/><rect x="113.0" y="0" width="1.8" height="40.5" fill="#000"/><rect x="116.1" y="0" width="4.8" height="40.5" fill="#000"/><rect x="122.9" y="0" width="5.1" height="40.5" fill="#000"/><rect x="129.0" y="0" width="1.9" height="40.5" fill="#000"/><rect x="133.0" y="0" width="1.9" height="40.5" fill="#000"/><rect x="135.9" y="0" width="2.1" height="40.5" fill="#000"/></svg>
<div class="a" style="left:1674.7px;top:661.07px;font-size:13.5px;color:#222;letter-spacing:0.007px;line-height:1;">2015000000149</div>
<div class="a" style="left:1810px;top:633px;width:58px;height:28px;background:#5a62d8;border-radius:3px"></div>
<div class="a" style="left:1828px;top:641.77px;font-size:11.5px;color:#fff;letter-spacing:-0.439px;font-weight:bold;-webkit-text-stroke:0;line-height:1;">Print</div>
<div class="a" style="left:1874px;top:284px;width:41px;height:50px;background:#fff;border-radius:2px 0 0 2px;box-shadow:0 0 14px rgba(200,200,215,.3)"></div><div class="a" style="left:1881px;top:293px;width:27px;height:27px;background:#f0f0f3;border-radius:3px"></div><svg class="a" style="left:1884px;top:298px" width="20" height="16" viewBox="0 0 20 16"><path d="M1,3 L4,3 L6,11 L15,11 L17,5 L5,5" fill="none" stroke="#e6b422" stroke-width="1.6"/><path d="M15,5 L18,1" stroke="#e6b422" stroke-width="1.5"/><circle cx="7" cy="13.5" r="1.5" fill="none" stroke="#e6b422" stroke-width="1.2"/><circle cx="13.5" cy="13.5" r="1.5" fill="none" stroke="#e6b422" stroke-width="1.2"/></svg>
<div class="a" style="left:1874px;top:342px;width:41px;height:45px;background:#fff;border-radius:2px 0 0 2px;box-shadow:0 0 14px rgba(200,200,215,.3)"></div><div class="a" style="left:1881px;top:351px;width:27px;height:27px;background:#f0f0f3;border-radius:3px"></div><svg class="a" style="left:1887px;top:355px" width="16" height="16" viewBox="0 0 16 16"><circle cx="8" cy="8" r="7.6" fill="#2ec3a2"/><path d="M5.2,4 L6.8,3.8 L7.6,6 L6.7,6.8 Q7.1,8.6 8.5,9.6 L9.5,8.9 L11.3,10.1 L10.8,11.8 Q7.2,11.8 5.4,8.2 Q4.5,6 5.2,4Z" fill="#fff"/></svg>
<div class="a" style="left:1874px;top:401px;width:41px;height:45px;background:#fff;border-radius:2px 0 0 2px;box-shadow:0 0 14px rgba(200,200,215,.3)"></div><div class="a" style="left:1881px;top:410px;width:27px;height:27px;background:#f0f0f3;border-radius:3px"></div><svg class="a" style="left:1880px;top:409px" width="29" height="29" viewBox="1880 409 29 29"><path d="M1894.3,422.9 L1894.3,409.5 A13.4,13.4 0 0 0 1880.9,422.9Z" fill="#62d0c8"/><path d="M1894.3,422.9 L1907.7,422.9 A13.4,13.4 0 0 0 1894.3,409.5Z" fill="#f1cf30"/><path d="M1894.3,422.9 L1880.9,422.9 A13.4,13.4 0 0 0 1894.3,436.3Z" fill="#2bb0ef"/><path d="M1894.3,422.9 L1894.3,436.3 A13.4,13.4 0 0 0 1907.7,422.9Z" fill="#de8a62"/><circle cx="1894.3" cy="422.9" r="7" fill="#8a5ad8"/><text x="1894.3" y="426.3" font-size="8.5" text-anchor="middle" fill="#fff" font-weight="bold" font-family="Liberation Sans">AI</text></svg>
<svg class="a" style="left:236px;top:726px" width="36" height="40" viewBox="236 726 36 40"><path d="M249.5,749.5 L249.5,737 Q249.5,735.2 251.25,735.2 Q253,735.2 253,737 L253,741.3 Q254.6,740.2 256.2,741 Q257.8,740.3 259.3,741.4 Q261.7,741.2 261.7,743.5 L261.7,751.5 Q261.7,758.6 254.5,758.6 L252.5,758.6 Q249.5,758.6 247.3,755.5 L244.4,750.2 Q243.6,748 245.4,747.2 Q247.3,746.4 249.5,749.5Z" fill="#fff" stroke="#15151c" stroke-width="1.25" stroke-linejoin="round"/><path d="M253,741.3 L253,745.8 M256.2,741.2 L256.2,745.8 M259.3,741.6 L259.3,745.8" stroke="#15151c" stroke-width="1.1"/></svg>
<div id="sb"></div><div id="sbt"></div>
</body></html>
